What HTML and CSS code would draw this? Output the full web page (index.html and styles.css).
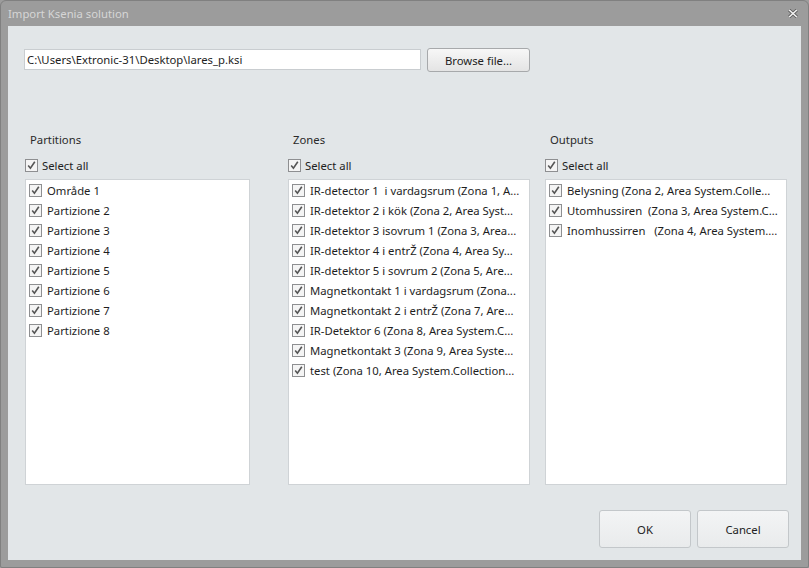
FILE: index.html
```html
<!DOCTYPE html>
<html>
<head>
<meta charset="utf-8">
<link rel="stylesheet" href="styles.css">
</head>
<body>
<div class="window">
  <div class="titlebar">
    <span class="title">Import Ksenia solution</span>
    <svg class="close" width="10" height="9" viewBox="0 0 10 9"><path d="M1.2 1 L8.8 8 M8.8 1 L1.2 8" stroke="#5c5c5c" stroke-width="3.2"/><path d="M1.2 1 L8.8 8 M8.8 1 L1.2 8" stroke="#f2f2f2" stroke-width="1.6"/></svg>
  </div>
  <div class="content">
    <div class="file-row">
      <div class="path">C:\Users\Extronic-31\Desktop\lares_p.ksi</div>
      <button class="browse">Browse file...</button>
    </div>
    <div class="columns">
      <div class="col col1">
        <div class="label">Partitions</div>
        <div class="selall"><span class="cb"></span>Select all</div>
        <div class="list w225">
          <div class="item"><span class="cb"></span>Område 1</div>
          <div class="item"><span class="cb"></span>Partizione 2</div>
          <div class="item"><span class="cb"></span>Partizione 3</div>
          <div class="item"><span class="cb"></span>Partizione 4</div>
          <div class="item"><span class="cb"></span>Partizione 5</div>
          <div class="item"><span class="cb"></span>Partizione 6</div>
          <div class="item"><span class="cb"></span>Partizione 7</div>
          <div class="item"><span class="cb"></span>Partizione 8</div>
        </div>
      </div>
      <div class="col col2">
        <div class="label">Zones</div>
        <div class="selall"><span class="cb"></span>Select all</div>
        <div class="list w242">
          <div class="item"><span class="cb"></span>IR-detector 1&nbsp; i vardagsrum (Zona 1, A...</div>
          <div class="item"><span class="cb"></span>IR-detektor 2 i kök (Zona 2, Area Syst...</div>
          <div class="item"><span class="cb"></span>IR-detektor 3 isovrum 1 (Zona 3, Area...</div>
          <div class="item"><span class="cb"></span>IR-detektor 4 i entrŽ (Zona 4, Area Sy...</div>
          <div class="item"><span class="cb"></span>IR-detektor 5 i sovrum 2 (Zona 5, Are...</div>
          <div class="item"><span class="cb"></span>Magnetkontakt 1 i vardagsrum (Zona...</div>
          <div class="item"><span class="cb"></span>Magnetkontakt 2 i entrŽ (Zona 7, Are...</div>
          <div class="item"><span class="cb"></span>IR-Detektor 6 (Zona 8, Area System.C...</div>
          <div class="item"><span class="cb"></span>Magnetkontakt 3 (Zona 9, Area Syste...</div>
          <div class="item"><span class="cb"></span>test (Zona 10, Area System.Collection...</div>
        </div>
      </div>
      <div class="col col3">
        <div class="label">Outputs</div>
        <div class="selall"><span class="cb"></span>Select all</div>
        <div class="list w242">
          <div class="item"><span class="cb"></span>Belysning (Zona 2, Area System.Colle...</div>
          <div class="item"><span class="cb"></span>Utomhussiren&nbsp; (Zona 3, Area System.C...</div>
          <div class="item"><span class="cb"></span>Inomhussirren&nbsp;&nbsp; (Zona 4, Area System....</div>
        </div>
      </div>
    </div>
    <div class="actions">
      <button class="btn">OK</button>
      <button class="btn">Cancel</button>
    </div>
  </div>
</div>
</body>
</html>
```
FILE: styles.css
```css
html, body {
  margin: 0;
  padding: 0;
  background: #9c9c9c;
}
body {
  width: 809px;
  height: 568px;
  overflow: hidden;
  font-family: "Noto Sans", "Open Sans", sans-serif;
  font-size: 11.3px;
  color: #1e1e1e;
}
.window {
  width: 809px;
  height: 568px;
  box-sizing: border-box;
  background: #9c9c9c;
  border: 1px solid #808080;
  border-radius: 6px 6px 2px 2px;
  display: flex;
  flex-direction: column;
}
.titlebar {
  box-sizing: border-box;
  height: 25px;
  flex: none;
  display: flex;
  align-items: center;
  justify-content: space-between;
  padding: 0 10px 1px 7px;
}
.title {
  color: #d6d6d6;
  font-size: 11.3px;
}
.close {
  display: block;
  margin-top: 1px;
}
.content {
  margin: 0 7px 7px 7px;
  flex: 1;
  background: #e2e6e8;
  display: flex;
  flex-direction: column;
  padding: 22px 12px 12px 17px;
}
.file-row {
  display: flex;
  align-items: flex-start;
  gap: 6px;
  height: 24px;
  margin-left: -1px;
}
.path {
  width: 393px;
  height: 19px;
  line-height: 19px;
  margin-top: 1px;
  background: #fff;
  border: 1px solid #c9cdd0;
  padding-left: 2px;
  white-space: nowrap;
}
.browse {
  width: 103px;
  height: 24px;
  border: 1px solid #a7a9ab;
  border-radius: 3px;
  background: linear-gradient(#f7f7f7, #e4e4e4);
  font-family: inherit;
  font-size: 11.3px;
  color: #222;
  padding: 0;
}
.columns {
  display: flex;
  margin-top: 60px;
}
.col1 { width: 263px; }
.col2 { width: 257px; }
.col3 { width: 242px; }
.label {
  height: 16px;
  line-height: 16px;
  padding-left: 5px;
  color: #2a2a2a;
}
.selall {
  display: flex;
  align-items: center;
  height: 16px;
  margin-top: 9px;
  padding-left: 0;
  gap: 4px;
}
.list {
  margin-top: 6px;
  background: #fff;
  border: 1px solid #cfd3d6;
  padding-top: 0;
  box-sizing: border-box;
  height: 306px;
}
.w225 { width: 225px; }
.w242 { width: 242px; }
.item {
  height: 20px;
  display: flex;
  align-items: center;
  padding-left: 3px;
  gap: 5px;
  white-space: nowrap;
}
.cb {
  display: inline-block;
  flex: none;
  width: 11px;
  height: 11px;
  border: 1px solid #8e8f91;
  background: #f4f4f4 url("data:image/svg+xml;utf8,<svg xmlns='http://www.w3.org/2000/svg' width='11' height='11' viewBox='0 0 11 11'><path d='M2.2 5.6 L4.4 8.2 L8.8 1.8' fill='none' stroke='%23555' stroke-width='1.6'/></svg>") no-repeat center;
}
.actions {
  display: flex;
  justify-content: flex-end;
  gap: 6px;
  margin-top: auto;
}
.btn {
  width: 92px;
  height: 38px;
  border: 1px solid #c3c7ca;
  border-radius: 3px;
  background: linear-gradient(#f3f4f5, #e9ebec);
  font-family: inherit;
  font-size: 11.3px;
  color: #222;
  padding: 0;
}
```
